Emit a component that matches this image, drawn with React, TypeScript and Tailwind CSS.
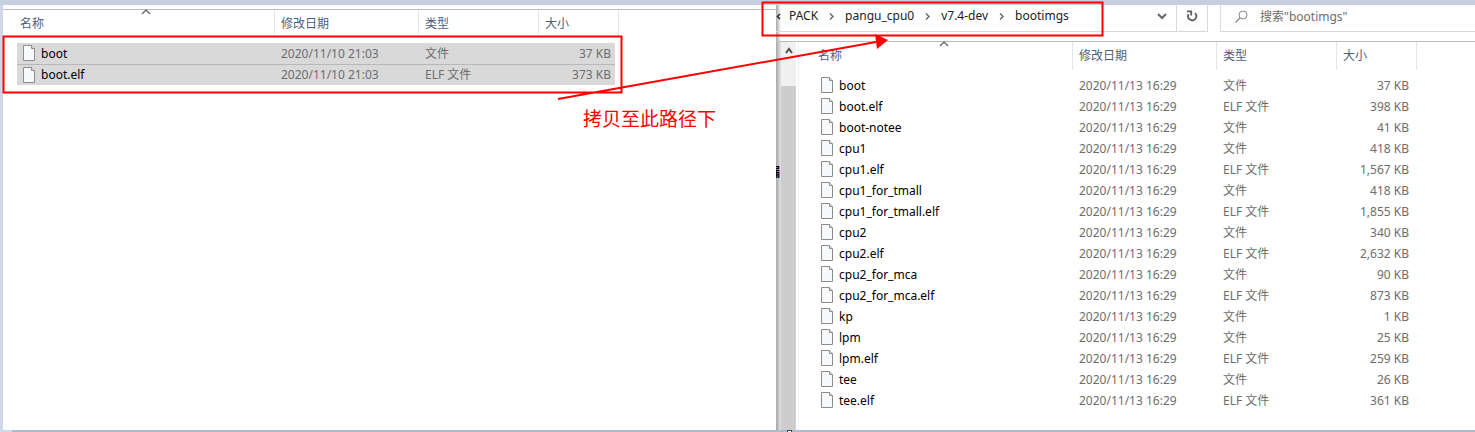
import type { ReactNode } from 'react'

type Entry = { name: string; date: string; type: string; size: string }

const make = (date: string, rows: [string, string][]): Entry[] =>
  rows.map(([name, size]) => ({
    name,
    date,
    type: name.endsWith('.elf') ? 'ELF 文件' : '文件',
    size: size + ' KB',
  }))

const sourceFiles = make('2020/11/10 21:03', [
  ['boot', '37'],
  ['boot.elf', '373'],
])

const targetFiles = make('2020/11/13 16:29', [
  ['boot', '37'],
  ['boot.elf', '398'],
  ['boot-notee', '41'],
  ['cpu1', '418'],
  ['cpu1.elf', '1,567'],
  ['cpu1_for_tmall', '418'],
  ['cpu1_for_tmall.elf', '1,855'],
  ['cpu2', '340'],
  ['cpu2.elf', '2,632'],
  ['cpu2_for_mca', '90'],
  ['cpu2_for_mca.elf', '873'],
  ['kp', '1'],
  ['lpm', '25'],
  ['lpm.elf', '259'],
  ['tee', '26'],
  ['tee.elf', '361'],
])

const path = ['PACK', 'pangu_cpu0', 'v7.4-dev', 'bootimgs']

function FileIcon() {
  return (
    <svg width="12" height="16" viewBox="0 0 12 16" className="mt-0.5 shrink-0 self-start" aria-hidden="true">
      <path d="M.5.5h8l3 3v12H.5z" fill="#f8f9fa" stroke="#8c8c8c" />
      <path d="M8.5.5v3h3" fill="#e4e4e4" stroke="#8c8c8c" />
    </svg>
  )
}

function Chevron({ d, className }: { d: string; className: string }) {
  return (
    <svg width="10" height="10" viewBox="0 0 10 10" className={className} aria-hidden="true">
      <path d={d} fill="none" stroke="currentColor" strokeWidth="1.4" />
    </svg>
  )
}

function HeadCell({ children, sorted }: { children: ReactNode; sorted?: boolean }) {
  const pad = sorted ? 'pl-[3px]' : 'pl-1.5'
  return (
    <th
      scope="col"
      className={`relative h-7 border-r border-[#e5e5e5] p-0 text-left font-normal text-[#4c607a] ${pad}`}
    >
      {sorted && (
        <Chevron d="M1 6 5 2l4 4" className="absolute -top-0.5 left-1/2 -translate-x-1/2 text-[#6a6a6a]" />
      )}
      {children}
    </th>
  )
}

function FileTable({ files, selected }: { files: Entry[]; selected?: boolean }) {
  return (
    <table className="table-fixed border-separate border-spacing-0">
      <colgroup>
        <col className="w-[258px]" />
        <col className="w-36" />
        <col className="w-[120px]" />
        <col className="w-20" />
      </colgroup>
      <thead>
        <tr>
          <HeadCell sorted>名称</HeadCell>
          <HeadCell>修改日期</HeadCell>
          <HeadCell>类型</HeadCell>
          <HeadCell>大小</HeadCell>
        </tr>
      </thead>
      <tbody className="text-[#6d6d6d]">
        <tr>
          <td colSpan={4} className="h-[5px] p-0" />
        </tr>
        {files.map((f, i) => {
          const tone = selected ? (i > 0 ? 'bg-[#d9d9d9] border-t border-[#b8b8b8]' : 'bg-[#d9d9d9]') : ''
          return (
            <tr key={f.name}>
              <td className="h-[21px] p-0">
                <div className={`flex h-[21px] items-center gap-1.5 pl-1.5 text-black ${tone}`}>
                  <FileIcon />
                  {f.name}
                </div>
              </td>
              <td className="p-0">
                <div className={`flex h-[21px] items-center pl-1.5 ${tone}`}>{f.date}</div>
              </td>
              <td className="p-0">
                <div className={`flex h-[21px] items-center pl-1.5 ${tone}`}>{f.type}</div>
              </td>
              <td className="p-0">
                <div className={`mr-1 flex h-[21px] items-center justify-end pr-1 ${tone}`}>{f.size}</div>
              </td>
            </tr>
          )
        })}
      </tbody>
    </table>
  )
}

function AddressBar() {
  return (
    <div className="flex h-9 items-start bg-[linear-gradient(to_right,#a6a6a6,#ffffff_5px)] text-[#222]">
      <nav
        aria-label="路径"
        className="flex h-[27px] min-w-0 grow items-center overflow-hidden border-b border-[#d9d9d9] pb-1"
      >
        <Chevron d="M4 3 1.5 5.5 4 8" className="mr-[3px] shrink-0" />
        {path.map((p, i) => (
          <span key={p} className="flex items-center">
            {i > 0 && <Chevron d="m4 2.5 3 3-3 3" className="mr-[9px] ml-2 shrink-0 text-[#666]" />}
            <a href={'#' + p}>{p}</a>
          </span>
        ))}
        <button type="button" aria-label="历史记录" className="mr-2 ml-auto text-[#666]">
          <svg width="12" height="10" viewBox="0 0 12 10" className="block" aria-hidden="true">
            <path d="M2 3l4 4 4-4" fill="none" stroke="currentColor" strokeWidth="2" />
          </svg>
        </button>
      </nav>
      <button
        type="button"
        aria-label="刷新"
        className="flex h-[27px] w-8 shrink-0 items-center justify-center border-x border-b border-[#d9d9d9] pb-1 text-[#5f5f5f]"
      >
        <svg width="12" height="12" viewBox="0 0 12 12" aria-hidden="true">
          <path
            d="M9 3.2A4.1 4.1 0 1 1 2.6 4.2M1 1.3h4.2V5.4"
            fill="none"
            stroke="currentColor"
            strokeWidth="1.8"
          />
        </svg>
      </button>
      <label className="ml-3 flex h-[27px] w-[255px] shrink-0 items-center border-b border-l border-[#d9d9d9] pb-1 pl-3.5 text-[#6d6d6d]">
        <svg width="13" height="13" viewBox="0 0 13 13" className="mr-3 shrink-0" aria-hidden="true">
          <circle cx="8" cy="5" r="4" fill="none" stroke="#888" />
          <path d="M5 8 .5 12.5" stroke="#888" strokeWidth="1.3" />
        </svg>
        <input
          type="search"
          aria-label="搜索"
          placeholder={'搜索"bootimgs"'}
          className="w-full min-w-0 bg-transparent pt-0.5 outline-none placeholder:text-[#6d6d6d]"
        />
      </label>
    </div>
  )
}

function Annotations() {
  return (
    <div className="pointer-events-none absolute inset-0">
      <svg width="1110" height="110" viewBox="0 0 1110 110" className="absolute top-0 left-0" aria-hidden="true">
        <g fill="none" stroke="#f00" strokeWidth="2">
          <path d="M3.5 36.5h618v56H3.5zM762.5 2.5h340v33h-340zM558 99 876 42" />
        </g>
        <path d="M875 34 888 40 877 49z" fill="#f00" />
      </svg>
      <p className="absolute top-[107px] left-[583px] text-[19px] leading-6 text-[#f00]">拷贝至此路径下</p>
    </div>
  )
}

export default function App() {
  return (
    <div className="relative flex min-h-screen flex-col overflow-hidden bg-white font-['Noto_Sans','Noto_Sans_CJK_SC',sans-serif] text-xs">
      <div className="h-[5px] bg-[#c6cfe0]" />
      <main className="flex grow">
        <div className="w-[3px] shrink-0 bg-[#cfd8e8]" />
        <section aria-label="源文件夹" className="min-w-0 grow pt-1">
          <div className="border-t border-[#bcbcbc] pl-[14px]">
            <FileTable files={sourceFiles} selected />
          </div>
        </section>
        <section aria-label="目标文件夹" className="flex w-[699px] shrink-0 flex-col">
          <AddressBar />
          <div className="flex grow border-t border-[#bcbcbc]">
            <div className="flex w-[5px] shrink-0 justify-end overflow-hidden bg-linear-to-r from-[#a6a6a6] to-[#e6e6e6] pt-[123px] pr-px">
              <span className="shrink-0 font-bold text-black">漏</span>
            </div>
            <div className="flex w-[15px] shrink-0 flex-col bg-[#f0f0f0]">
              <button type="button" aria-label="向上滚动" className="flex h-11 justify-center pt-1 text-[#505050]">
                <svg width="10" height="10" viewBox="0 0 10 10" aria-hidden="true">
                  <path d="M2 7l3-4 3 4" fill="none" stroke="currentColor" strokeWidth="2" />
                </svg>
              </button>
              <div className="grow bg-[#cdcdcd]" />
            </div>
            <div className="ml-0.5 border-l border-[#f0f0f0] pl-4">
              <FileTable files={targetFiles} />
            </div>
          </div>
        </section>
      </main>
      <div className="flex h-0.5 bg-[#cfd8e8] pl-3">
        <div className="grow bg-[#adb9cf]" />
        <div className="w-[5px] border-x border-t border-[#444] bg-white" />
        <div className="w-[683px] bg-[#adb9cf]" />
      </div>
      <Annotations />
    </div>
  )
}
